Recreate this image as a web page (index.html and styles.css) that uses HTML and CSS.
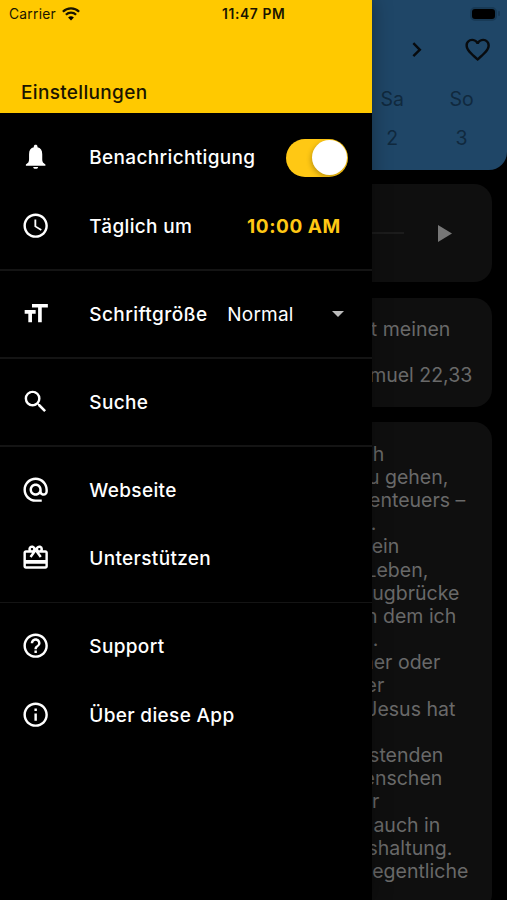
FILE: index.html
```html
<!DOCTYPE html>
<html lang="de">
<head>
<meta charset="utf-8">
<title>Einstellungen</title>
<link rel="stylesheet" href="styles.css">
</head>
<body>
<div class="screen">
  <aside class="drawer">
    <header class="head">
      <div class="status">
        <span class="carrier">Carrier</span>
        <svg class="wifi" viewBox="0 0 18 14"><path d="M9 13.6l2.9-3a4.2 4.2 0 0 0-5.8 0z"/><path class="arc" d="M3.9 7.8a7.3 7.3 0 0 1 10.2 0M.9 4.700a11.600 11.600 0 0 1 16.200 0"/></svg>
        <span class="clock">11:47 PM</span>
      </div>
      <h1>Einstellungen</h1>
    </header>
    <nav class="menu">
      <div class="row">
        <svg class="icon" viewBox="0 0 24 24"><path d="M12 22c1.100 0 2-.7 2-1.600h-4c0 .9.900 1.600 2 1.600zm6-5.200c-.5-1-.6-2-.6-3.300V10c0-3-1.300-5-3.900-5.600V3.600c0-.83-.67-1.400-1.500-1.400s-1.500.57-1.500 1.400v.8C7.900 5 6.600 7 6.600 10v3.500c0 1.300-.1 2.300-.6 3.300l-2 1.700v1h16v-1z"/></svg>
        <span class="label">Benachrichtigung</span><span class="switch"></span>
      </div>
      <div class="row">
        <svg class="icon" viewBox="0 0 24 24"><path d="M11.990 2C6.470 2 2 6.480 2 12s4.470 10 9.990 10C17.520 22 22 17.520 22 12S17.520 2 11.990 2zM12 20c-4.420 0-8-3.580-8-8s3.580-8 8-8 8 3.580 8 8-3.580 8-8 8zm.5-13H11v6l5.250 3.150.75-1.230-4.500-2.670z"/></svg>
        <span class="label">Täglich um</span><span class="time">10:00 AM</span>
      </div>
      <hr>
      <div class="row">
        <svg class="icon" viewBox="0 0 24 24"><path d="M9 4v3h5v12h3V7h5V4H9zm-6 8h3v7h3v-7h3V9H3v3z"/></svg>
        <span class="label size">Schriftgröße</span><span class="value">Normal</span><span class="caret"></span>
      </div>
      <hr>
      <div class="row">
        <svg class="icon" viewBox="0 0 24 24"><path d="M15.500 14h-.79l-.28-.27A6.471 6.471 0 0 0 16 9.500 6.500 6.500 0 1 0 9.500 16c1.610 0 3.090-.59 4.230-1.570l.27.28v.79l5 4.990L20.490 19l-4.990-5zm-6 0C7.010 14 5 11.990 5 9.500S7.010 5 9.500 5 14 7.010 14 9.500 11.990 14 9.500 14z"/></svg>
        <span class="label">Suche</span>
      </div>
      <hr>
      <div class="row">
        <svg class="icon" viewBox="0 0 24 24"><path d="M12 2C6.480 2 2 6.480 2 12s4.480 10 10 10h5v-2h-5c-4.340 0-8-3.660-8-8s3.660-8 8-8 8 3.660 8 8v1.430c0 .79-.71 1.570-1.500 1.570s-1.500-.78-1.500-1.570V12c0-2.760-2.240-5-5-5s-5 2.240-5 5 2.240 5 5 5c1.380 0 2.640-.56 3.540-1.470.65.89 1.770 1.470 2.960 1.470 1.970 0 3.500-1.600 3.500-3.570V12c0-5.520-4.480-10-10-10zm0 13c-1.660 0-3-1.340-3-3s1.340-3 3-3 3 1.340 3 3-1.340 3-3 3z"/></svg>
        <span class="label">Webseite</span>
      </div>
      <div class="row">
        <svg class="icon" viewBox="0 0 24 24"><path d="M20 6h-2.180c.11-.31.18-.65.18-1a2.996 2.996 0 0 0-5.500-1.650l-.5.67-.5-.68C10.960 2.540 10.050 2 9 2 7.340 2 6 3.340 6 5c0 .35.070.69.180 1H4c-1.110 0-1.990.89-1.990 2L2 19c0 1.110.89 2 2 2h16c1.110 0 2-.89 2-2V8c0-1.110-.89-2-2-2zm-5-2c.55 0 1 .45 1 1s-.45 1-1 1-1-.45-1-1 .45-1 1-1zM9 4c.55 0 1 .45 1 1s-.45 1-1 1-1-.45-1-1 .45-1 1-1zm11 15H4v-2h16v2zm0-5H4V8h5.080L7 10.830 8.620 12 11 8.760l1-1.360 1 1.360L15.380 12 17 10.830 14.920 8H20v6z"/></svg>
        <span class="label">Unterstützen</span>
      </div>
      <hr>
      <div class="row">
        <svg class="icon" viewBox="0 0 24 24"><path d="M11 18h2v-2h-2v2zm1-16C6.480 2 2 6.480 2 12s4.480 10 10 10 10-4.480 10-10S17.520 2 12 2zm0 18c-4.410 0-8-3.590-8-8s3.590-8 8-8 8 3.590 8 8-3.590 8-8 8zm0-14c-2.210 0-4 1.790-4 4h2c0-1.100.9-2 2-2s2 .9 2 2c0 2-3 1.750-3 5h2c0-2.250 3-2.500 3-5 0-2.210-1.790-4-4-4z"/></svg>
        <span class="label">Support</span>
      </div>
      <div class="row">
        <svg class="icon" viewBox="0 0 24 24"><path d="M11 7h2v2h-2zm0 4h2v6h-2zm1-9C6.480 2 2 6.480 2 12s4.480 10 10 10 10-4.480 10-10S17.520 2 12 2zm0 18c-4.410 0-8-3.590-8-8s3.590-8 8-8 8 3.590 8 8-3.590 8-8 8z"/></svg>
        <span class="label">Über diese App</span>
      </div>
    </nav>
  </aside>
  <main class="page">
    <section class="week">
      <div class="battery"><span class="cell"></span><span class="tip"></span></div>
      <div class="tools">
        <svg class="icon" viewBox="0 0 24 24"><path d="M10 6L8.590 7.410 13.170 12l-4.580 4.590L10 18l6-6z"/></svg>
        <svg class="icon" viewBox="0 0 24 24"><path d="M16.500 3c-1.740 0-3.410.81-4.500 2.090C10.910 3.810 9.240 3 7.500 3 4.420 3 2 5.420 2 8.500c0 3.780 3.400 6.860 8.550 11.540L12 21.350l1.450-1.320C18.600 15.360 22 12.280 22 8.500 22 5.420 19.580 3 16.500 3zm-4.400 15.550l-.1.100-.1-.1C7.140 14.240 4 11.390 4 8.500 4 6.500 5.500 5 7.500 5c1.540 0 3.040.99 3.570 2.360h1.870C13.460 5.990 14.960 5 16.500 5c2 0 3.500 1.500 3.500 3.500 0 2.890-3.140 5.740-7.900 10.050z"/></svg>
      </div>
      <div class="days"><span>Sa</span><span>So</span></div>
      <div class="days dates"><span>2</span><span>3</span></div>
    </section>
    <section class="card player"><span class="track"></span><svg class="play" viewBox="0 0 15 18"><path d="M0 0L15 9 0 18z"/></svg></section>
    <section class="card verse"><p class="e78">t meinen</p><p class="e100">muel 22,33</p></section>
    <section class="card story">
      <p class="e12">h</p>
      <p class="e76">u gehen,</p>
      <p class="e93">enteuers –</p>
      <p class="e4">.</p>
      <p class="e27">ein</p>
      <p class="e56">Leben,</p>
      <p class="e87">ugbrücke</p>
      <p class="e84">n dem ich</p>
      <p class="e6">.</p>
      <p class="e68">her oder</p>
      <p class="e12">er</p>
      <p class="e83">Jesus hat</p>
      <p class="e4"></p>
      <p class="e71">stenden</p>
      <p class="e70">enschen</p>
      <p class="e7">r</p>
      <p class="e68">auch in</p>
      <p class="e80">shaltung.</p>
      <p class="e96">egentliche</p>
    </section>
  </main>
</div>
</body>
</html>
```
FILE: styles.css
```css
* { box-sizing: border-box; }
body { margin: 0; background: #000; font-family: Inter, "Liberation Sans", sans-serif; }
.screen { display: grid; grid-template-columns: 372.300px 1fr; width: 507px; height: 900px; overflow: hidden; background: #000; }
.drawer { z-index: 1; background: #000; color: #fff; box-shadow: 0 0 18px rgba(0, 0, 0, .35); }
.head { height: 113.300px; background: #ffc900; color: #1a1500; display: flex; flex-direction: column; justify-content: space-between; padding: 5px 0 8.500px; }
.status { display: flex; align-items: center; height: 17px; padding-left: 9px; font-size: 13.800px; }
.carrier { width: 53px; letter-spacing: .25px; }
.wifi { width: 18px; height: 14px; }
.wifi .arc { fill: none; stroke: #1a1500; stroke-width: 2.300; }
.clock { margin-left: 142px; font-weight: 600; letter-spacing: .62px; }
h1 { margin: 0 0 0 21px; font-size: 19px; line-height: 24px; font-weight: 500; letter-spacing: .33px; }
.menu { padding-top: 10px; }
.row { display: flex; align-items: center; height: 68.500px; padding: 0 24px 0 20.500px; font-size: 19px; font-weight: 500; letter-spacing: .34px; white-space: nowrap; }
.icon { width: 29.300px; height: 29.300px; flex: none; fill: currentColor; }
.row .icon { margin-top: -1px; margin-left: .1px; }
.label { margin-left: 39.400px; }
.switch { display: flex; justify-content: flex-end; width: 62.500px; height: 38px; margin-left: auto; padding: 1.500px; border-radius: 19px; background: #ffc814; }
.switch::after { content: ""; width: 35px; height: 35px; border-radius: 50%; background: #fff; box-shadow: -1px 2px 5px rgba(0, 0, 0, .25); }
.time { margin: 0 7.500px 0 auto; color: #ffc814; font-weight: 700; letter-spacing: .55px; }
.size { width: 138px; letter-spacing: .42px; }
.value { font-weight: 400; letter-spacing: .2px; }
.caret { margin: 0 4px 0 auto; border: 6.500px solid transparent; border-top-color: #bbb; border-bottom: 0; }
hr { margin: 9px 0; border: 0; height: 1.500px; background: #141414; }
.page { min-width: 0; overflow: hidden; }
.week { height: 169.500px; border-radius: 0 0 18px; background: #1f4667; color: #080b0e; }
.battery { display: flex; align-items: center; height: 27px; padding-left: 98px; gap: 1px; }
.cell { width: 27px; height: 14px; border: 2px solid #183a56; border-radius: 5px; background: #000; }
.tip { width: 2px; height: 5px; border-radius: 2px; background: #183a56; }
.tools { display: flex; height: 45px; align-items: center; padding-left: 29.500px; gap: 31.500px; }
.days { display: flex; align-items: center; height: 53px; color: #10293e; font-size: 19.500px; }
.days span { text-align: center; }
.days span:first-child { width: 41px; }
.days span:last-child { width: 98px; }
.days span:last-child { padding-left: 4px; }
.dates { height: 25px; }
.card { width: 119.700px; border-radius: 0 18px 18px 0; background: #0f0f0f; color: #696969; font-size: 19.500px; line-height: 23.200px; }
.player { display: flex; align-items: center; gap: 34px; height: 98px; margin-top: 14.500px; }
.track { width: 32px; height: 2px; background: #1c1c1c; }
.play { width: 14px; height: 17px; fill: #777; }
.verse { height: 109px; margin-top: 16px; padding-top: 19.700px; display: flex; flex-direction: column; gap: 23.400px; }
.story { height: 490px; margin-top: 15px; padding-top: 20.600px; }
p { display: flex; justify-content: flex-end; height: 23.200px; margin: 0; white-space: nowrap; }
.e4 { width: 4px; }
.e6 { width: 6px; }
.e7 { width: 7px; }
.e12 { width: 12px; }
.e27 { width: 27px; }
.e56 { width: 56px; }
.e68 { width: 68px; }
.e70 { width: 70px; }
.e71 { width: 71px; }
.e76 { width: 76px; }
.e78 { width: 78px; }
.e80 { width: 80px; }
.e83 { width: 83px; }
.e84 { width: 84px; }
.e87 { width: 87px; }
.e93 { width: 93px; }
.e96 { width: 96px; }
.e100 { width: 100px; }
```
